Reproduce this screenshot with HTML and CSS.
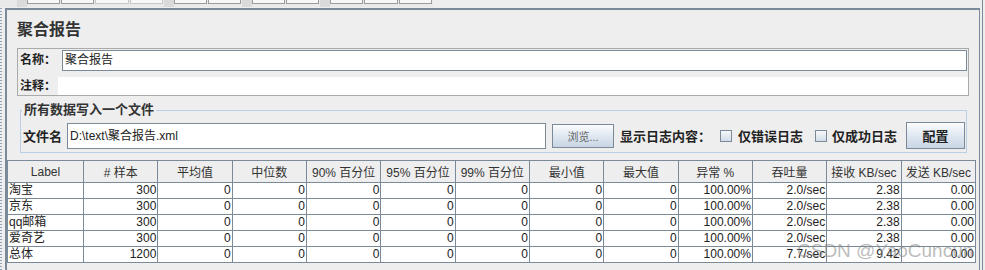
FILE: index.html
```html
<!DOCTYPE html>
<html lang="zh">
<head>
    <meta charset="UTF-8">
    <title>聚合报告</title>
    <link rel="stylesheet" href="styles.css">
</head>
<body>
    <div class="screen">
        <div class="content">
            <div class="toolbar">
                <div class="tools">
                    <span class="sep"></span>
                    <span class="tool"></span>
                    <span class="tool"></span>
                    <span class="tool off"></span>
                    <span class="tool off"></span>
                    <span class="sep"></span>
                    <span class="tool"></span>
                    <span class="tool"></span>
                    <span class="sep"></span>
                    <span class="tool"></span>
                    <span class="tool"></span>
                    <span class="sep"></span>
                    <span class="tool"></span>
                    <span class="tool"></span>
                    <span class="tool"></span>
                </div>
            </div>
            <div class="workspace">
                <div class="splitter"></div>
                <div class="panel">
                    <div class="title">聚合报告</div>

                    <div class="name-box">
                        <div class="name-row">
                            <span class="lbl">名称：</span>
                            <div class="field">聚合报告</div>
                        </div>
                        <div class="note-row">
                            <span class="lbl short">注释：</span>
                            <div class="note"></div>
                        </div>
                    </div>

                    <fieldset class="output">
                        <legend>所有数据写入一个文件</legend>
                        <div class="file-row">
                            <span class="file-lbl">文件名</span>
                            <div class="file-field">D:\text\聚合报告.xml</div>
                            <button class="btn browse">浏览...</button>
                            <span class="log-lbl">显示日志内容：</span>
                            <span class="check"></span>
                            <span class="check-lbl">仅错误日志</span>
                            <span class="check"></span>
                            <span class="check-lbl last">仅成功日志</span>
                            <button class="btn config">配置</button>
                        </div>
                    </fieldset>

                    <table class="report">
                        <colgroup>
                            <col class="first">
                            <col><col><col><col><col><col><col><col><col><col><col><col>
                        </colgroup>
                        <thead>
                            <tr>
                                <th>Label</th>
                                <th># 样本</th>
                                <th>平均值</th>
                                <th>中位数</th>
                                <th>90% 百分位</th>
                                <th>95% 百分位</th>
                                <th>99% 百分位</th>
                                <th>最小值</th>
                                <th>最大值</th>
                                <th>异常 %</th>
                                <th>吞吐量</th>
                                <th>接收 KB/sec</th>
                                <th>发送 KB/sec</th>
                            </tr>
                        </thead>
                        <tbody>
                            <tr><td>淘宝</td><td>300</td><td>0</td><td>0</td><td>0</td><td>0</td><td>0</td><td>0</td><td>0</td><td>100.00%</td><td>2.0/sec</td><td>2.38</td><td>0.00</td></tr>
                            <tr><td>京东</td><td>300</td><td>0</td><td>0</td><td>0</td><td>0</td><td>0</td><td>0</td><td>0</td><td>100.00%</td><td>2.0/sec</td><td>2.38</td><td>0.00</td></tr>
                            <tr><td>qq邮箱</td><td>300</td><td>0</td><td>0</td><td>0</td><td>0</td><td>0</td><td>0</td><td>0</td><td>100.00%</td><td>2.0/sec</td><td>2.38</td><td>0.00</td></tr>
                            <tr><td>爱奇艺</td><td>300</td><td>0</td><td>0</td><td>0</td><td>0</td><td>0</td><td>0</td><td>0</td><td>100.00%</td><td>2.0/sec</td><td>2.38</td><td>0.00</td></tr>
                            <tr><td>总体</td><td>1200</td><td>0</td><td>0</td><td>0</td><td>0</td><td>0</td><td>0</td><td>0</td><td>100.00%</td><td>7.7/sec</td><td>9.42</td><td>0.00</td></tr>
                        </tbody>
                    </table>
                </div>
            </div>
        </div>
        <div class="edge"></div>
    </div>
    <div class="watermark">CSDN @YaoCuncun</div>
</body>
</html>
```

FILE: styles.css
```css
body {
    margin: 0;
    background-color: #eeeeee;
    font-family: "Liberation Sans", "Noto Sans CJK SC", sans-serif;
    color: #222;
    width: 985px;
    height: 270px;
    overflow: hidden;
    position: relative;
}

.screen {
    display: flex;
    height: 270px;
}

.content {
    width: 982px;
}

.edge {
    width: 1px;
    background-color: #7a8a99;
}

/* toolbar strip, only bottom edge of buttons visible */
.toolbar {
    height: 8px;
}

.tools {
    display: flex;
    align-items: flex-start;
    width: 416px;
    height: 7px;
    padding-left: 17px;
    background-color: #e9e9e9;
}

.sep {
    width: 10px;
    height: 7px;
    background-color: #dadada;
}

.tool {
    width: 32px;
    height: 3px;
    margin-right: 1px;
    border: 1px solid #9c9c9c;
    border-top: none;
    background-color: #f7f7f7;
}

.tool.off {
    border-color: #c9c9c9;
}

.workspace {
    display: flex;
    height: 262px;
}

.splitter {
    width: 5px;
    background-image: linear-gradient(#8fa3b8 50%, transparent 50%);
    background-size: 2px 3px;
    background-repeat: repeat-y;
}

.panel {
    flex: 1;
    margin-right: 2px;
    border-top: 2px solid #7a8a99;
    border-left: 2px solid #7a8a99;
    border-right: 1px solid #7a8a99;
    background-color: #eeeeee;
}

.title {
    margin: 10px 0 0 10px;
    font-size: 16px;
    line-height: 20px;
    font-weight: bold;
    color: #333;
}

.name-box {
    margin: 8px 10px 0 10px;
    border: 1px solid #aaaaaa;
}

.name-row {
    display: flex;
    padding-top: 1px;
}

.lbl {
    width: 42px;
    padding-left: 2px;
    font-size: 12px;
    line-height: 21px;
    font-weight: bold;
}

.lbl.short {
    width: 38px;
    line-height: 18px;
}

.field {
    flex: 1;
    height: 21px;
    box-sizing: border-box;
    margin-right: 1px;
    padding-left: 2px;
    border: 1px solid #7a8a99;
    background-color: white;
    font-size: 12px;
    line-height: 19px;
}

.note-row {
    display: flex;
    margin-top: 6px;
    height: 18px;
}

.note {
    flex: 1;
    background-color: white;
}

.output {
    margin: 6px 12px 0 13px;
    padding: 4px 0 3px 1px;
    border: 1px solid #b8cfe5;
    min-width: 0;
}

.output legend {
    padding: 0 2px;
    font-size: 13px;
    line-height: 16px;
    font-weight: bold;
    color: #333;
}

.file-row {
    display: flex;
    align-items: center;
    height: 27px;
    font-size: 13px;
}

.file-lbl {
    width: 44px;
    padding-left: 1px;
    font-weight: bold;
}

.file-field {
    width: 479px;
    height: 26px;
    box-sizing: border-box;
    padding-left: 2px;
    border: 1px solid #7a8a99;
    background-color: white;
    font-size: 12px;
    line-height: 24px;
}

.btn {
    box-sizing: border-box;
    border: 1px solid #7a8a99;
    background: linear-gradient(#fbfcfd, #dde6f0 55%, #c8d5e4);
    padding: 0;
    font-family: "Liberation Sans", "Noto Sans CJK SC", sans-serif;
}

.browse {
    width: 62px;
    height: 24px;
    margin-left: 6px;
    font-size: 11px;
    color: #666;
}

.log-lbl {
    width: 100px;
    margin-left: 6px;
    font-weight: bold;
}

.check {
    width: 12px;
    height: 12px;
    box-sizing: border-box;
    border: 1px solid #7a8a99;
    background: linear-gradient(#f6f8fa, #d2dce8);
}

.check-lbl {
    width: 77px;
    margin-left: 6px;
    font-weight: bold;
}

.check-lbl.last {
    width: 74px;
    margin-left: 5px;
}

.config {
    width: 59px;
    height: 27px;
    font-size: 13px;
    font-weight: bold;
    color: #222;
}

.report {
    margin-top: 7px;
    width: 969px;
    table-layout: fixed;
    border-collapse: collapse;
    font-size: 12px;
}

.report col.first {
    width: 76px;
}

.report th,
.report td {
    border: 1px solid #7a8a99;
    padding: 0 1px;
    white-space: nowrap;
    overflow: hidden;
}

.report th {
    height: 21px;
    background-color: #eeeeee;
    font-weight: normal;
    color: #333;
}

.report td {
    height: 15px;
    line-height: 15px;
    background-color: white;
    text-align: right;
    color: #222;
}

.report td:first-child {
    text-align: left;
}

.watermark {
    position: absolute;
    left: 797px;
    top: 240px;
    font-size: 19px;
    line-height: 22px;
    color: rgba(130, 130, 130, 0.55);
}
```
